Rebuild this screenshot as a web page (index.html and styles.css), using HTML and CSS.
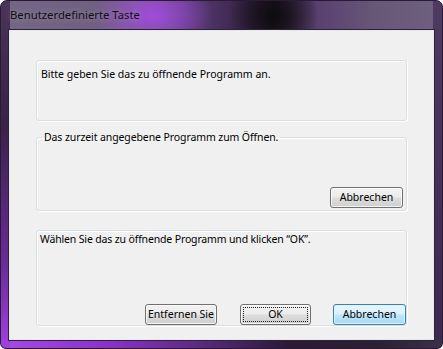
FILE: index.html
```html
<!DOCTYPE html>
<html lang="de">
<head>
<meta charset="utf-8">
<title>Benutzerdefinierte Taste</title>
<link rel="stylesheet" href="styles.css">
</head>
<body>
<div class="window">
  <div class="titlebar"><span class="title">Benutzerdefinierte Taste</span></div>
  <div class="client">
    <div class="group g1">
      <p class="msg">Bitte geben Sie das zu öffnende Programm an.</p>
    </div>
    <fieldset class="group g2">
      <legend class="legend">Das zurzeit angegebene Programm zum Öffnen.</legend>
      <div class="g2body"><button class="btn w73">Abbrechen</button></div>
    </fieldset>
    <div class="group g3">
      <p class="msg narrow">Wählen Sie das zu öffnende Programm und klicken “OK”.</p>
      <div class="row row3">
        <button class="btn w72">Entfernen Sie</button>
        <button class="btn w71 focus"><span class="focusrect">OK</span></button>
        <button class="btn w73 default">Abbrechen</button>
      </div>
    </div>
  </div>
</div>
</body>
</html>
```

FILE: styles.css
```css
* { box-sizing: border-box; }
html, body { margin: 0; padding: 0; background: #ffffff; }
body { font-family: "Noto Sans", "Open Sans", sans-serif; font-size: 10.5px; color: #000; }

.window {
  width: 443px;
  height: 349px;
  border-radius: 7px 7px 6px 6px;
  border: 1px solid #2a1a36;
  display: flex;
  flex-direction: column;
  overflow: hidden;
  background:
    radial-gradient(ellipse 60px 40px at 152px 14px, rgba(165,75,225,0.95), rgba(165,75,225,0) 100%),
    radial-gradient(ellipse 45px 40px at 272px 14px, rgba(15,12,18,1), rgba(15,12,18,0) 100%),
    linear-gradient(180deg, #4a3458 0%, #3a2248 35%, #6a2a98 75%, #a040e0 100%) left top / 9px 100% no-repeat,
    linear-gradient(90deg, #a848e8 0%, #8a30c8 25%, #5a2a80 45%, #2a1a36 65%, #2a2034 85%, #3a3048 100%) left bottom / 100% 10px no-repeat,
    linear-gradient(180deg, #4e3a62 0%, #3a2850 100%) right top / 9px 100% no-repeat,
    linear-gradient(90deg, #746684 0%, #6e5e80 30%, #5a3e78 42%, #3a2448 55%, #1e1622 62%, #5a4070 72%, #685878 85%, #6e6080 100%);
}

.titlebar {
  height: 28px;
  flex: none;
  display: flex;
  align-items: center;
  padding-left: 9px;
}
.title {
  font-size: 11.3px;
  color: #101010;
  text-shadow: 0 0 6px rgba(255,255,255,0.35);
  position: relative;
  top: -1px;
}

.client {
  margin: 0 7px 7px 7px;
  height: 313px;
  background: #f0f0f0;
  border: 1px solid #2e2438;
  box-shadow: inset 0 0 0 1px #e8e8ec;
  display: flex;
  flex-direction: column;
  padding: 30px 27px 0 27px;
}

.group {
  border: 1px solid #d5dfe5;
  border-radius: 3px;
  box-shadow: inset 1px 1px 0 #ffffff, 1px 1px 0 #ffffff;
  margin: 0;
  min-width: 0;
}
.msg { margin: 0; line-height: 16px; white-space: nowrap; }
.narrow { letter-spacing: -0.15px; }

.g1 { height: 61px; padding: 5px 4px 0 4px; }

.g2 {
  height: 82px;
  margin-top: 8px;
  padding: 0 3px 2px 5px;
}
.legend {
  padding: 0 2px;
  line-height: 16px;
  white-space: nowrap;
  letter-spacing: -0.1px;
}
.g2body {
  height: 63px;
  display: flex;
  align-items: flex-end;
  justify-content: flex-end;
}

.g3 {
  height: 96px;
  margin-top: 19px;
  padding: 0 0 0 3px;
  display: flex;
  flex-direction: column;
}

.row { display: flex; justify-content: flex-end; margin-top: auto; }
.row3 .w72 { margin-right: 23px; }
.row3 .w71 { margin-right: 22px; }

.btn {
  height: 21px;
  font-family: "Noto Sans", "Open Sans", sans-serif;
  font-size: 10.5px;
  color: #000;
  border: 1px solid #707070;
  border-radius: 3px;
  padding: 0;
  background: linear-gradient(180deg, #f2f2f2 0%, #ebebeb 48%, #dddddd 52%, #cfcfcf 100%);
  box-shadow: inset 0 0 0 1px rgba(255,255,255,0.75);
  line-height: 17px;
}
.w71 { width: 71px; }
.w72 { width: 72px; }
.w73 { width: 73px; }

.default {
  border-color: #3c7fb1;
  background: linear-gradient(180deg, #eaf6fd 0%, #d9f0fc 48%, #bee6fd 52%, #a7d9f5 100%);
  box-shadow: inset 0 0 0 1px rgba(220,245,255,0.9);
}
.focus { padding: 2px; }
.focusrect {
  display: block;
  height: 15px;
  line-height: 13px;
  border: 1px dotted #202020;
}
```
